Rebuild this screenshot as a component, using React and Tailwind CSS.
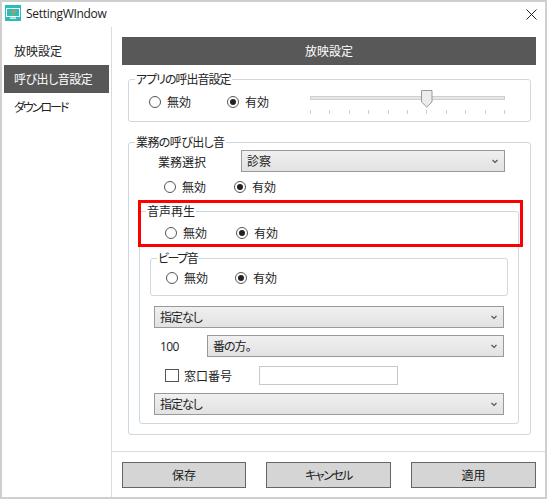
const jp = "font-['Noto_Sans_CJK_JP','Noto_Sans',sans-serif] [font-feature-settings:'palt']";

function Radio({ checked, label }) {
  return (
    <span className="flex items-center gap-[6px] text-[12px] leading-[16px] text-[#222]">
      <span className="flex h-[12px] w-[12px] items-center justify-center rounded-full border border-[#555] bg-white">
        {checked && <span className="h-[6px] w-[6px] rounded-full bg-[#222]" />}
      </span>
      {label}
    </span>
  );
}

function RadioPair({ className }) {
  return (
    <div className={`flex ${className}`}>
      <Radio label="無効" />
      <Radio checked label="有効" />
    </div>
  );
}

function Chevron() {
  return (
    <svg width="6" height="5" viewBox="0 0 6 5" className="shrink-0">
      <path d="M0.5 1 L3 3.5 L5.5 1" fill="none" stroke="#555" strokeWidth="1.2" />
    </svg>
  );
}

function Select({ label, className }) {
  return (
    <div className={`flex h-[22px] items-center justify-between border border-[#999] bg-gradient-to-b from-[#f0f0f0] to-[#e2e2e2] pl-[5px] pr-[6px] text-[12px] text-[#222] ${className}`}>
      <span>{label}</span>
      <Chevron />
    </div>
  );
}

function Group({ title, track, className, children }) {
  return (
    <fieldset className={`rounded-[3px] border border-[#cdd8e0] ${className}`}>
      <legend className={`ml-[6px] px-[1px] pb-[2px] text-[12px] leading-[13px] text-[#222] ${track}`}>{title}</legend>
      {children}
    </fieldset>
  );
}

function Btn({ label, className }) {
  return (
    <button className={`h-[26px] border border-[#666] bg-[#d5d5d5] text-[12px] text-[#222] ${className}`}>{label}</button>
  );
}

export default function App() {
  return (
    <div className={`relative flex h-[499px] w-[547px] flex-col border-2 border-[#cfcfcf] bg-white ${jp}`}>
      <div className="flex h-[25px] shrink-0 items-center justify-between pb-[3px] pl-[3px] pr-[8px]">
        <div className="flex items-center gap-[5px]">
          <svg width="16" height="16" viewBox="0 0 16 16">
            <rect width="16" height="16" fill="#2dbdb8" />
            <rect x="1.5" y="3.5" width="13" height="8" fill="none" stroke="#fff" />
            <path d="M6.8 10.5 L8.2 6.5 L11 6.5" fill="none" stroke="#f08a24" strokeWidth="1.3" />
            <rect x="5" y="12.5" width="6" height="1.2" fill="#fff" />
          </svg>
          <span className="mt-[1px] font-['Open_Sans',sans-serif] text-[12px] tracking-[-0.3px] text-[#222]">SettingWIndow</span>
        </div>
        <svg width="11" height="11" viewBox="0 0 11 11" className="mt-[2px]">
          <path d="M0.5 0.5 L10.5 10.5 M10.5 0.5 L0.5 10.5" stroke="#222" strokeWidth="1" />
        </svg>
      </div>

      <div className="flex min-h-0 flex-1">
        <nav className="w-[110px] shrink-0 border-r border-[#dcdcdc] pl-[2px] pr-[2px] pt-[10px] text-[12px] text-[#222]">
          <div className="flex h-[28px] items-center pl-[10px]">放映設定</div>
          <div className="flex h-[28px] items-center bg-[#585858] pl-[10px] tracking-[-0.5px] text-white">呼び出し音設定</div>
          <div className="flex h-[28px] items-center pl-[10px] tracking-[-2px]">ダウンロード</div>
        </nav>

        <div className="flex min-w-0 flex-1 flex-col">
          <div className="flex-1 pl-[10px] pr-[9px] pt-[10px]">
            <div className="flex h-[28px] items-center justify-center bg-[#585858] text-[12px] text-white">放映設定</div>

            <Group title="アプリの呼出音設定" track="tracking-[-1px]" className="ml-[6px] mt-[7px] h-[50px] w-[403px]">
              <div className="flex items-start">
                <RadioPair className="ml-[20px] mt-[7px] w-[161px] gap-[36px]" />
                <div className="relative w-[195px] pt-[9px]">
                  <div className="h-[4px] border border-[#cfcfcf] bg-[#e6e6e6]" />
                  <svg width="12" height="18" viewBox="0 0 12 18" className="absolute left-[111px] top-[3px]">
                    <path d="M0.5 0.5 H11 V12 L5.75 17 L0.5 12 Z" fill="#ececec" stroke="#999" />
                  </svg>
                  <div className="mt-[10px] flex justify-between">
                    {[0, 1, 2, 3, 4, 5, 6, 7, 8, 9, 10].map((i) => (
                      <span key={i} className="h-[4px] w-[1px] bg-[#cfcfcf]" />
                    ))}
                  </div>
                </div>
              </div>
            </Group>

            <Group title="業務の呼び出し音" track="tracking-[-0.6px]" className="ml-[6px] mt-[13px] h-[300px] w-[403px]">
              <div className="flex items-center">
                <span className="ml-[29px] w-[83px] pt-[2px] text-[12px] text-[#222]">業務選択</span>
                <Select label="診察" className="w-[264px]" />
              </div>
              <RadioPair className="ml-[35px] mt-[7px] gap-[28px]" />

              <Group title="音声再生" track="tracking-normal" className="ml-[10px] mt-[9px] h-[220px] w-[380px]">
                <RadioPair className="ml-[25px] mt-[6px] gap-[29px]" />

                <Group title="ビープ音" track="tracking-[-1.5px]" className="ml-[10px] mt-[10px] h-[45px] w-[358px]">
                  <RadioPair className="ml-[15px] mt-[4px] gap-[27px]" />
                </Group>

                <div className="ml-[14px] mt-[10px] flex w-[350px] flex-col">
                  <Select label="指定なし" className="w-full tracking-[-1px]" />
                  <div className="mt-[7px] flex items-center">
                    <span className="ml-[6px] w-[47px] pt-[2px] font-['Open_Sans',sans-serif] text-[12px] tracking-[-0.6px] text-[#222]">100</span>
                    <Select label="番の方。" className="w-[297px] tracking-[-1px]" />
                  </div>
                  <div className="mt-[9px] flex items-center">
                    <span className="ml-[11px] h-[13px] w-[14px] border border-[#555] bg-white" />
                    <span className="ml-[5px] w-[75px] text-[12px] text-[#222]">窓口番号</span>
                    <span className="h-[19px] w-[139px] border border-[#c8c8c8] bg-white" />
                  </div>
                  <Select label="指定なし" className="mt-[8px] w-full tracking-[-1px]" />
                </div>
              </Group>
            </Group>
          </div>

          <div className="flex h-[46px] shrink-0 items-start justify-between border-t border-[#dcdcdc] pl-[10px] pr-[9px] pt-[10px]">
            <Btn label="保存" className="w-[124px]" />
            <Btn label="キャンセル" className="w-[125px] tracking-[-1.5px]" />
            <Btn label="適用" className="w-[125px]" />
          </div>
        </div>
      </div>

      <div className="absolute left-[136px] top-[198px] h-[47px] w-[385px] border-[3px] border-[#f00]" />
    </div>
  );
}
